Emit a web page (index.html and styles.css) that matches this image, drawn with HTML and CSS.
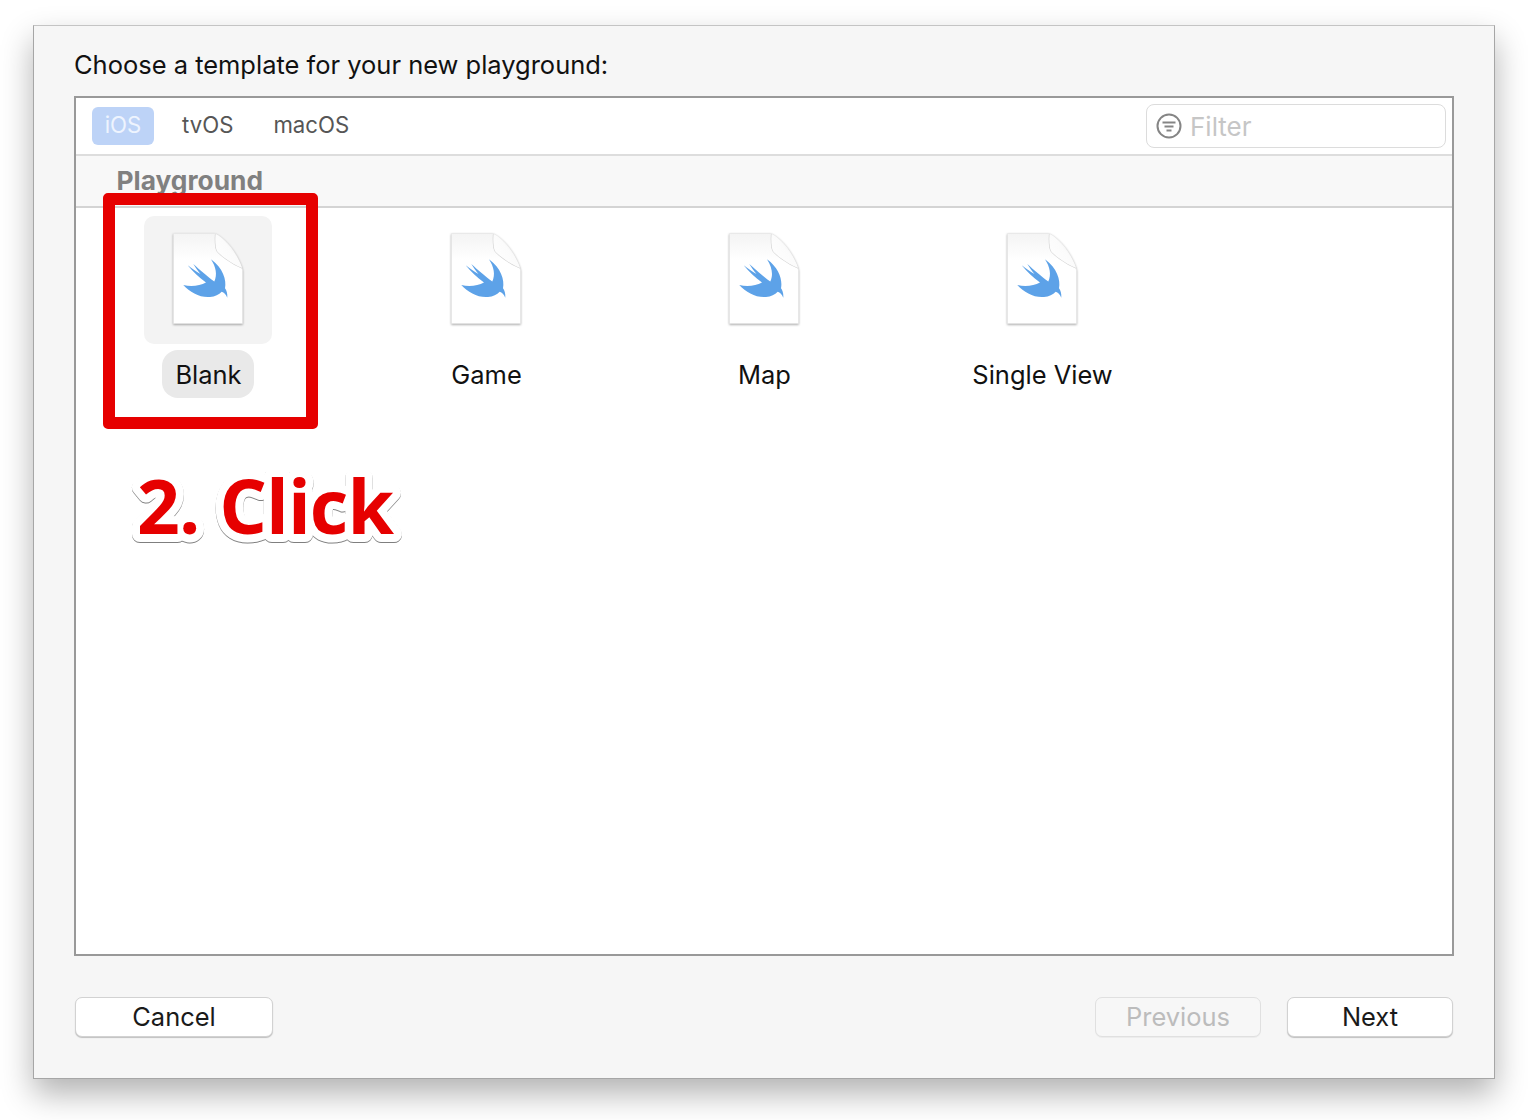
FILE: index.html
```html
<!DOCTYPE html>
<html lang="en">
<head>
<meta charset="utf-8">
<title>Choose a template</title>
<link rel="stylesheet" href="styles.css">
</head>
<body>
<svg class="defs" width="0" height="0" aria-hidden="true">
  <defs>
    <linearGradient id="paper" x1="0" y1="0" x2="0" y2="1">
      <stop offset="0" stop-color="#f4f4f4"/>
      <stop offset="0.3" stop-color="#ffffff"/>
      <stop offset="1" stop-color="#ffffff"/>
    </linearGradient>
    <linearGradient id="fold" x1="0" y1="1" x2="1" y2="0">
      <stop offset="0" stop-color="#ffffff"/>
      <stop offset="0.55" stop-color="#fbfbfb"/>
      <stop offset="1" stop-color="#cfcfcf"/>
    </linearGradient>
    <symbol id="swift-doc" viewBox="0 0 76 100">
      <path class="doc-sheet" d="M3.5 3.5H45C57 9 69 26 72.5 40V93.5H3.5Z" fill="url(#paper)"/>
      <path class="doc-crease" d="M45.5 4C45 12 45.5 18 47 21C49 24 60 33 72 38"/>
      <path d="M45.5 4C45 12 45.5 18 47 21C49 24 60 33 72 38C68 26 56 9 45.5 4Z" fill="url(#fold)"/>
      <path fill="#5da2e8" d="M13.3 55C20 62 30 68 40 67C45 66.5 49 64.5 51.7 61.7C54 62.3 56 64.5 57.3 67.7C57.6 63.5 56.6 60.3 55 58.2C56.7 50 53 38 41 29.3C46 37 47.5 45 44.3 51.5C38 47 30 40 23.3 34C25.5 37.5 27.5 40.5 30.5 44C26 41.5 21.5 38.5 17.7 35.3C22.5 41.5 29 47.5 36 52.5C30 55.5 22 57 13.3 55Z"/>
    </symbol>
  </defs>
</svg>

<main class="window">
  <h1 class="title">Choose a template for your new playground:</h1>

  <section class="panel">
    <div class="toolbar">
      <nav class="tabs">
        <span class="tab tab-active">iOS</span>
        <span class="tab">tvOS</span>
        <span class="tab">macOS</span>
      </nav>
      <div class="filter">
        <svg class="filter-icon" viewBox="0 0 26 26" width="26" height="26" aria-hidden="true">
          <circle cx="13" cy="13" r="11.5" fill="none" stroke="#858585" stroke-width="2"/>
          <path d="M6.5 9.5H19.5M8.5 13.5H17.5M10.5 17.5H15.5" stroke="#858585" stroke-width="2" fill="none"/>
        </svg>
        <span class="filter-text">Filter</span>
      </div>
    </div>

    <h2 class="section-head">Playground</h2>

    <div class="templates">
      <article class="template template-selected">
        <div class="thumb"><svg class="doc" width="76" height="100"><use href="#swift-doc"/></svg></div>
        <span class="label">Blank</span>
      </article>
      <article class="template">
        <div class="thumb"><svg class="doc" width="76" height="100"><use href="#swift-doc"/></svg></div>
        <span class="label">Game</span>
      </article>
      <article class="template">
        <div class="thumb"><svg class="doc" width="76" height="100"><use href="#swift-doc"/></svg></div>
        <span class="label">Map</span>
      </article>
      <article class="template">
        <div class="thumb"><svg class="doc" width="76" height="100"><use href="#swift-doc"/></svg></div>
        <span class="label">Single View</span>
      </article>
    </div>

    <div class="callout-box"></div>
    <svg class="callout-text" width="300" height="120"><text x="11" y="76">2. Click</text></svg>
  </section>

  <footer class="footer">
    <button class="btn btn-cancel" type="button">Cancel</button>
    <div class="nav-buttons">
      <button class="btn btn-nav btn-disabled" type="button">Previous</button>
      <button class="btn btn-nav" type="button">Next</button>
    </div>
  </footer>
</main>
</body>
</html>
```

FILE: styles.css
```css
* { box-sizing: border-box; }

html, body {
  margin: 0;
  background: #ffffff;
}

body {
  height: 1120px;
  padding: 25px 33px 0;
  overflow: hidden;
  font-family: Inter, "Liberation Sans", sans-serif;
  color: #1a1a1a;
}

.defs { position: absolute; }

.window {
  width: 1462px;
  height: 1054px;
  padding: 0 40px;
  background: #f6f6f6;
  border: 1px solid #a6a6a6;
  border-top-color: #c4c4c4;
  box-shadow: 0 15px 30px rgba(0, 0, 0, 0.3);
}

.title {
  margin: 0;
  height: 70px;
  padding-top: 20px;
  font-size: 25.47px;
  line-height: 38px;
  font-weight: 400;
  color: #111;
}

.panel {
  position: relative;
  height: 860px;
  background: #fff;
  border: 2px solid #999;
}

.toolbar {
  display: flex;
  align-items: center;
  justify-content: space-between;
  height: 58px;
  padding: 2px 6px 2px 16px;
  border-bottom: 2px solid #ddd;
}

.tabs {
  display: flex;
  align-items: center;
  gap: 28px;
}

.tab {
  height: 38px;
  font-size: 22.2px;
  line-height: 36px;
  color: #565656;
}

.tab + .tab + .tab { margin-left: 12px; }

.tab-active {
  width: 62px;
  text-align: center;
  color: #eef4fe;
  background: #bdd3f7;
  border-radius: 6px;
}

.filter {
  display: flex;
  align-items: center;
  gap: 8px;
  width: 300px;
  height: 44px;
  padding-left: 9px;
  border: 1px solid #dcdcdc;
  border-radius: 8px;
}

.filter-text {
  font-size: 26px;
  color: #c6c6c6;
}

.section-head {
  margin: 0;
  height: 52px;
  padding: 9px 0 0 40.5px;
  background: #f8f8f8;
  border-bottom: 2px solid #d4d4d4;
  font-size: 26.3px;
  line-height: 32px;
  font-weight: 700;
  color: #808080;
}

.templates {
  display: flex;
  padding: 8px 0 0 68px;
}

.template {
  display: flex;
  flex-direction: column;
  align-items: center;
  width: 128px;
  margin-right: 150px;
}

.thumb {
  display: flex;
  align-items: center;
  justify-content: center;
  width: 128px;
  height: 128px;
  border-radius: 10px;
}

.template-selected .thumb { background: #f3f3f3; }

.doc {
  display: block;
  margin-top: -1px;
  overflow: visible;
  filter: drop-shadow(0 1px 1px rgba(0, 0, 0, 0.35));
}

.doc-sheet { stroke: #e8e8e8; stroke-width: 0.6; }
.doc-crease { fill: none; stroke: #d2d2d2; stroke-width: 1.2; }

.label {
  margin-top: 6px;
  padding: 1px 12px 0 13px;
  height: 48px;
  font-size: 25.47px;
  line-height: 48px;
  white-space: nowrap;
  color: #111;
}

.template-selected .label {
  background: #e9e9e9;
  border-radius: 16px;
}

.callout-box {
  position: absolute;
  left: 27px;
  top: 95px;
  width: 215px;
  height: 236px;
  border: 12px solid #e60000;
  border-radius: 5px;
}

.callout-text {
  position: absolute;
  left: 50px;
  top: 360px;
  overflow: visible;
  font-family: "Open Sans", "Noto Sans", sans-serif;
  font-size: 75px;
  font-weight: 700;
  letter-spacing: -1px;
  word-spacing: 1.5px;
  fill: #e60000;
  stroke: #fff;
  stroke-width: 16px;
  stroke-linejoin: round;
  paint-order: stroke fill;
  filter: drop-shadow(0 1.5px 0.7px rgba(0, 0, 0, 0.5));
}

.footer {
  display: flex;
  justify-content: space-between;
  padding: 41px 1px 0;
}

.nav-buttons {
  display: flex;
  gap: 26px;
}

.btn {
  height: 40px;
  padding: 0;
  font-family: inherit;
  font-size: 25.47px;
  line-height: 38px;
  color: #1a1a1a;
  background: #fff;
  border: 1px solid #d2d2d2;
  border-radius: 7px;
  box-shadow: 0 1px 1px rgba(0, 0, 0, 0.22);
}

.btn-cancel { width: 198px; }
.btn-nav { width: 166px; }

.btn-disabled {
  color: #bcbcbc;
  background: #f7f7f7;
  border-color: #e0e0e0;
  box-shadow: 0 1px 0 rgba(0, 0, 0, 0.04);
}
```
